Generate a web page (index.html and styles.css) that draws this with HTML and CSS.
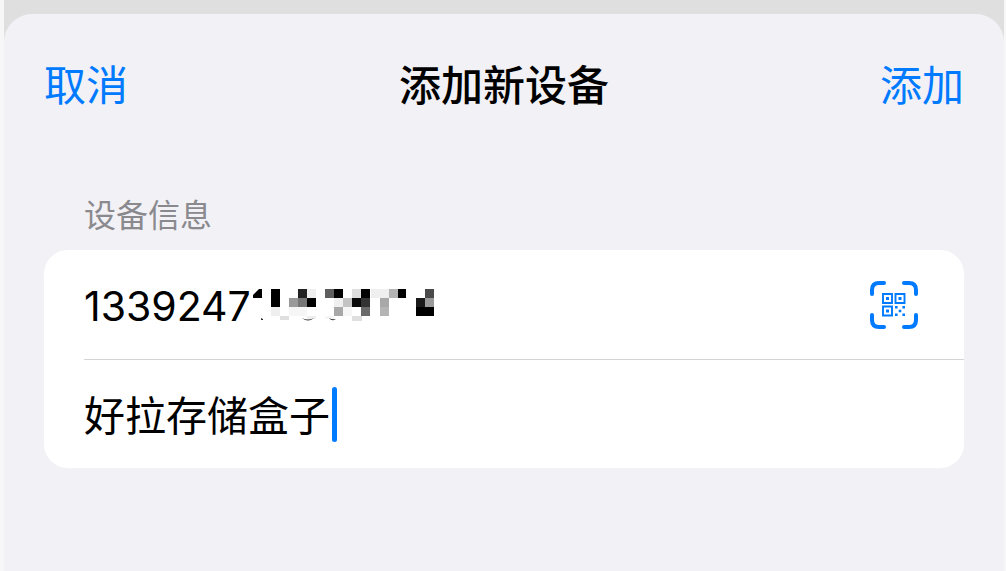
FILE: index.html
```html
<!DOCTYPE html>
<html lang="zh-CN">
<head>
<meta charset="UTF-8">
<meta name="viewport" content="width=device-width, initial-scale=1.0">
<title>添加新设备</title>
<link rel="stylesheet" href="styles.css">
</head>

<body>
<div class="backdrop">
    <main class="sheet">
        <header class="navbar">
            <button type="button">取消</button>
            <h1>添加新设备</h1>
            <button type="button" class="add">添加</button>
        </header>

        <form class="section">
            <h2>设备信息</h2>
            <div class="card">
                <div class="row">
                    <input class="number" type="text" value="1339247" aria-label="设备编号">
                    <!-- hidden digits -->
                    <svg class="mask" width="184" height="32" viewBox="252 290 184 32" shape-rendering="crispEdges" aria-hidden="true">
                        <path d="M254 299v-3l6-6h3v9z" shape-rendering="auto"/>
                        <path d="M272 290h9v18h-9zM308 299h9v9h-9zM335 290h9v9h-9zM362 290h9v9h-9zM398 290h9v9h-9zM417 308h18v9h-18z"/>
                        <path fill="#0a0a0a" d="M353 299h9v9h-9z"/>
                        <path fill="#1a1a1a" d="M417 299h9v9h-9z"/>
                        <path fill="#222" d="M299 290h9v9h-9z"/>
                        <path fill="#333" d="M362 299h9v9h-9z"/>
                        <path fill="#4a4a4a" d="M426 290h9v9h-9z"/>
                        <path fill="#5e5e5e" d="M326 290h9v9h-9z"/>
                        <path fill="#6a6a6a" d="M362 308h9v9h-9z"/>
                        <path fill="#777" d="M299 299h9v9h-9z"/>
                        <path fill="#9a9a9a" d="M290 299h9v9h-9zM426 299h9v9h-9z"/>
                        <path fill="#a8a8a8" d="M335 308h9v9h-9zM381 299h9v9h-9z"/>
                        <path fill="#b4b4b4" d="M381 308h9v9h-9zM390 290h9v9h-9z"/>
                        <path fill="#c4c4c4" d="M344 299h9v9h-9z"/>
                        <path fill="#dfdfdf" d="M353 290h9v9h-9zM281 317h9v4h-9zM353 317h10v5h-10z"/>
                        <path fill="#efefef" d="M272 308h9v9h-9zM308 290h9v9h-9zM308 317h9v3h-9zM335 299h9v9h-9zM372 290h18v9h-18z"/>
                        <path fill="#f6f6f6" d="M290 308h18v9h-18zM326 317h9v3h-9zM344 308h9v9h-9z"/>
                        <path fill="#333" shape-rendering="auto" d="M262 319l2 1v1h-2zM303 319q6 3 12 0q-6 5-12 0zM330 319q3 2 7 1q-4 3-7-1z"/>
                    </svg>
                    <button type="button" class="scan" aria-label="扫描二维码">
                        <svg width="50" height="50" viewBox="0 0 50 50" fill="none" stroke="#007aff">
                            <path stroke-width="4" stroke-linecap="round" d="M3 14V10Q3 3 10 3H15M35 3H40Q47 3 47 10V14M47 35V40Q47 47 40 47H35M15 47H10Q3 47 3 40V35"/>
                            <path stroke-width="1.9" d="M14 14h9v9h-9zM26.5 14h9v9h-9zM14 26.5h9v9h-9z"/>
                            <path fill="#007aff" stroke="none" d="M17 17h3v3h-3zM29.5 17h3v3h-3zM17 29.5h3v3h-3zM26 26h2.6v2.6H26zM33.4 26H36v2.6h-2.6zM29.7 29.7h2.6v2.6h-2.6zM26 33.4h2.6V36H26zM33.4 33.4H36V36h-2.6z"/>
                        </svg>
                    </button>
                </div>
                <div class="row">
                    <input class="name" type="text" value="好拉存储盒子" aria-label="设备名称">
                    <span class="caret"></span>
                </div>
            </div>
        </form>
    </main>
</div>
</body>
</html>
```
FILE: styles.css
```css
* {
    box-sizing: border-box;
}
body {
    margin: 0;
    background-color: #f7f7f7;
    font-family: Inter, "Noto Sans CJK SC", sans-serif;
    color: black;
}
.backdrop {
    min-height: 100vh;
    margin: 0 2px 0 4px;
    padding-top: 14px;
    background-color: #dfdfdf;
    display: flex;
}
.sheet {
    flex: 1;
    padding: 42px 40px;
    border-radius: 28px 28px 0 0;
    background-color: #f2f1f6;
}
.navbar {
    display: grid;
    grid-template-columns: 1fr auto 1fr;
    align-items: center;
    height: 60px;
}
button {
    padding: 0;
    border: none;
    background: none;
    color: #007aff;
    font: inherit;
    cursor: pointer;
}
.navbar button {
    justify-self: start;
    font-size: 42px;
    line-height: 60px;
}
.navbar .add {
    justify-self: end;
}
h1 {
    margin: 0;
    font-size: 42px;
    line-height: 60px;
    font-weight: 500;
}
.section {
    margin-top: 78px;
}
h2 {
    margin: 0 40px 12px;
    font-size: 32px;
    line-height: 44px;
    font-weight: 400;
    color: #8a8a8e;
}
.card {
    border-radius: 24px;
    background-color: white;
}
.row {
    display: flex;
    align-items: center;
    height: 109px;
    margin-left: 40px;
    padding-right: 45px;
}
.row + .row {
    border-top: 1px solid #d4d4d6;
}
input {
    padding: 2px 0 0;
    border: none;
    outline: none;
    background: none;
    color: inherit;
    font: inherit;
    font-size: 41px;
    line-height: 60px;
    field-sizing: content;
}
.name {
    padding: 4px 2px 0 0;
}
.scan {
    display: flex;
    margin-left: auto;
}
.caret {
    width: 5px;
    height: 55px;
    border-radius: 3px;
    background-color: #007aff;
}
```
